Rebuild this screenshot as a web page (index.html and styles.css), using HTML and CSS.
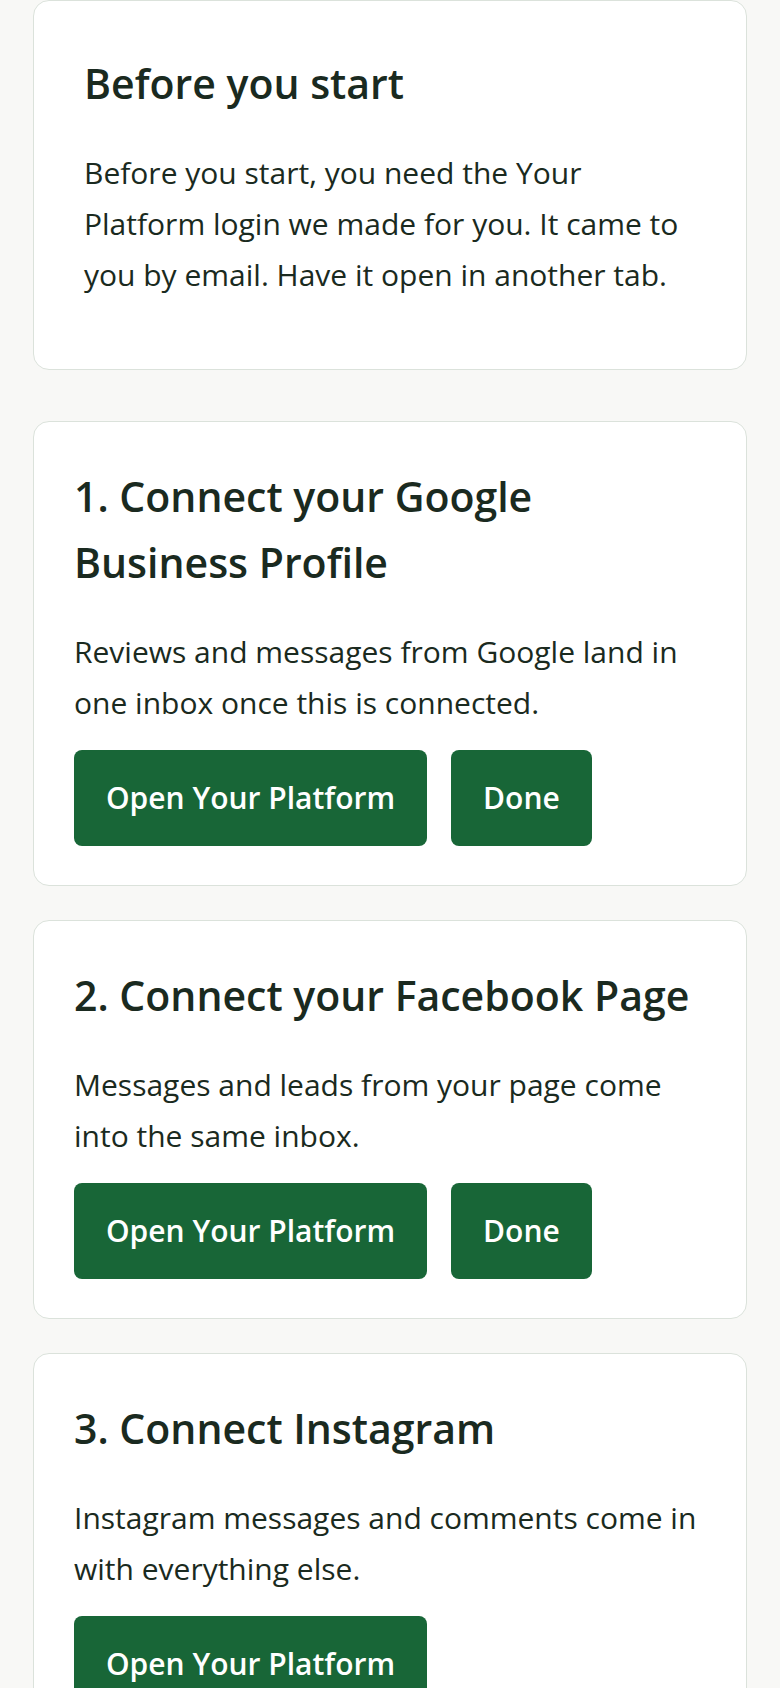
FILE: index.html
```html
<!DOCTYPE html>
<html lang="en">
<head>
    <meta charset="UTF-8">
    <meta name="viewport" content="width=device-width, initial-scale=1.0">
    <title>Get Connected</title>
    <link rel="stylesheet" href="styles.css">
</head>
<body>
    <main class="steps">
        <section class="card card-intro">
            <h2>Before you start</h2>
            <p>Before you start, you need the Your Platform login we made for you. It came to you by email. Have it open in another tab.</p>
        </section>

        <section class="card">
            <h2>1. Connect your Google Business Profile</h2>
            <p>Reviews and messages from Google land in one inbox once this is connected.</p>
            <div class="actions">
                <button class="btn">Open Your Platform</button>
                <button class="btn">Done</button>
            </div>
        </section>

        <section class="card">
            <h2>2. Connect your Facebook Page</h2>
            <p>Messages and leads from your page come into the same inbox.</p>
            <div class="actions">
                <button class="btn">Open Your Platform</button>
                <button class="btn">Done</button>
            </div>
        </section>

        <section class="card">
            <h2>3. Connect Instagram</h2>
            <p>Instagram messages and comments come in with everything else.</p>
            <div class="actions">
                <button class="btn">Open Your Platform</button>
            </div>
        </section>
    </main>
</body>
</html>
```

FILE: styles.css
```css
body {
    margin: 0;
    background-color: #f8f8f6;
    color: #1a2a20;
    font-family: "Open Sans", "Noto Sans", sans-serif;
}

.steps {
    padding: 0 33px 40px;
}

.card {
    background-color: #fff;
    border: 1px solid #dbe2db;
    border-radius: 16px;
    padding: 41px 40px 39px;
    margin-bottom: 34px;
}

.card h2 {
    font-size: 41px;
    font-weight: 600;
    line-height: 66px;
    margin: 0 0 31px;
}

.card p {
    font-size: 30px;
    line-height: 51px;
    margin: 0 0 22px;
}

/* intro box sits a bit apart from the steps */
.card-intro {
    padding: 49px 50px 50px;
    margin-bottom: 51px;
}

.card-intro h2 {
    margin-bottom: 31px;
}

.card-intro p {
    margin-bottom: 19px;
}

.actions {
    display: flex;
    gap: 24px;
}

.btn {
    background-color: #186637;
    color: #fff;
    border: none;
    border-radius: 8px;
    font-family: inherit;
    font-size: 30px;
    font-weight: 600;
    line-height: 48px;
    padding: 24px 32px;
    cursor: pointer;
}
```
